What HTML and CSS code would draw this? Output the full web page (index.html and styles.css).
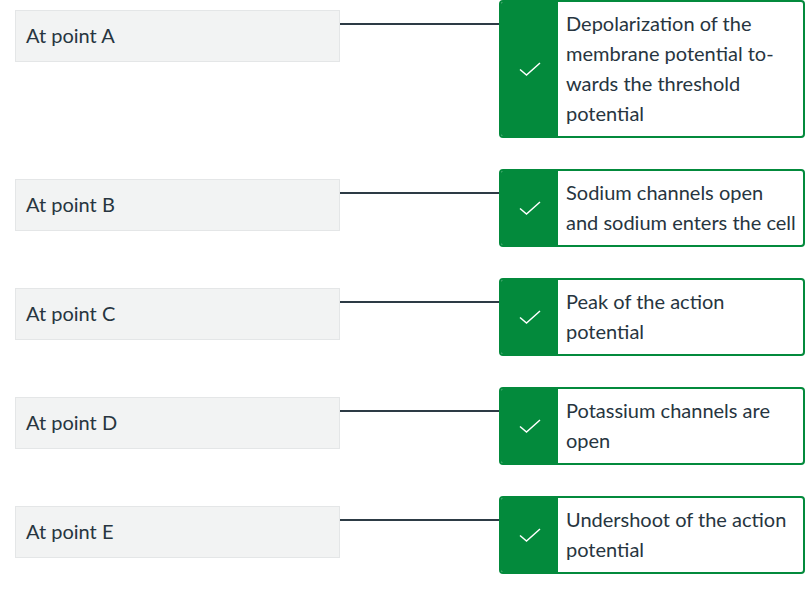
FILE: index.html
```html
<!DOCTYPE html>
<html lang="en">
<head>
    <meta charset="UTF-8">
    <meta name="viewport" content="width=device-width, initial-scale=1.0">
    <title>Matching answers</title>
    <link rel="stylesheet" href="styles.css">
</head>
<body>
    <div class="matches">
        <div class="match">
            <div class="prompt">At point A</div>
            <div class="connector"></div>
            <div class="answer">
                <div class="mark">
                    <svg width="22" height="14" viewBox="0 0 22 14"><polyline points="1,7.5 7.5,13 21,1" /></svg>
                </div>
                <div class="answer-text">Depolarization of the membrane potential to&shy;wards the threshold potential</div>
            </div>
        </div>

        <div class="match">
            <div class="prompt">At point B</div>
            <div class="connector"></div>
            <div class="answer">
                <div class="mark">
                    <svg width="22" height="14" viewBox="0 0 22 14"><polyline points="1,7.5 7.5,13 21,1" /></svg>
                </div>
                <div class="answer-text">Sodium channels open and sodium enters the cell</div>
            </div>
        </div>

        <div class="match">
            <div class="prompt">At point C</div>
            <div class="connector"></div>
            <div class="answer">
                <div class="mark">
                    <svg width="22" height="14" viewBox="0 0 22 14"><polyline points="1,7.5 7.5,13 21,1" /></svg>
                </div>
                <div class="answer-text">Peak of the action potential</div>
            </div>
        </div>

        <div class="match">
            <div class="prompt">At point D</div>
            <div class="connector"></div>
            <div class="answer">
                <div class="mark">
                    <svg width="22" height="14" viewBox="0 0 22 14"><polyline points="1,7.5 7.5,13 21,1" /></svg>
                </div>
                <div class="answer-text">Potassium channels are open</div>
            </div>
        </div>

        <div class="match">
            <div class="prompt">At point E</div>
            <div class="connector"></div>
            <div class="answer">
                <div class="mark">
                    <svg width="22" height="14" viewBox="0 0 22 14"><polyline points="1,7.5 7.5,13 21,1" /></svg>
                </div>
                <div class="answer-text">Undershoot of the action potential</div>
            </div>
        </div>
    </div>
</body>
</html>
```

FILE: styles.css
```css
body {
    font-family: Lato, "Open Sans", sans-serif;
    font-size: 20px;
    color: #273540;
    background: #fff;
    margin: 0;
    padding: 0 0 0 15px;
}

.matches {
    display: flex;
    flex-direction: column;
    gap: 31px;
}

.match {
    display: flex;
    align-items: flex-start;
}

.prompt {
    box-sizing: border-box;
    width: 325px;
    height: 52px;
    margin-top: 10px;
    padding: 0 10px 3px;
    display: flex;
    align-items: center;
    background: #f2f3f3;
    border: 1px solid #e4e6e7;
}

.connector {
    width: 159px;
    height: 2px;
    margin-top: 23px;
    background: #2d3b45;
}

.answer {
    box-sizing: border-box;
    width: 306px;
    display: flex;
    border: 2px solid #038a3c;
    border-radius: 4px;
    overflow: hidden;
}

.mark {
    width: 57px;
    flex-shrink: 0;
    background: #038a3c;
    display: flex;
    align-items: center;
    justify-content: center;
}

.mark svg polyline {
    fill: none;
    stroke: #fff;
    stroke-width: 1.5;
}

.answer-text {
    padding: 6px 4px 8px 8px;
    line-height: 30px;
}
```
